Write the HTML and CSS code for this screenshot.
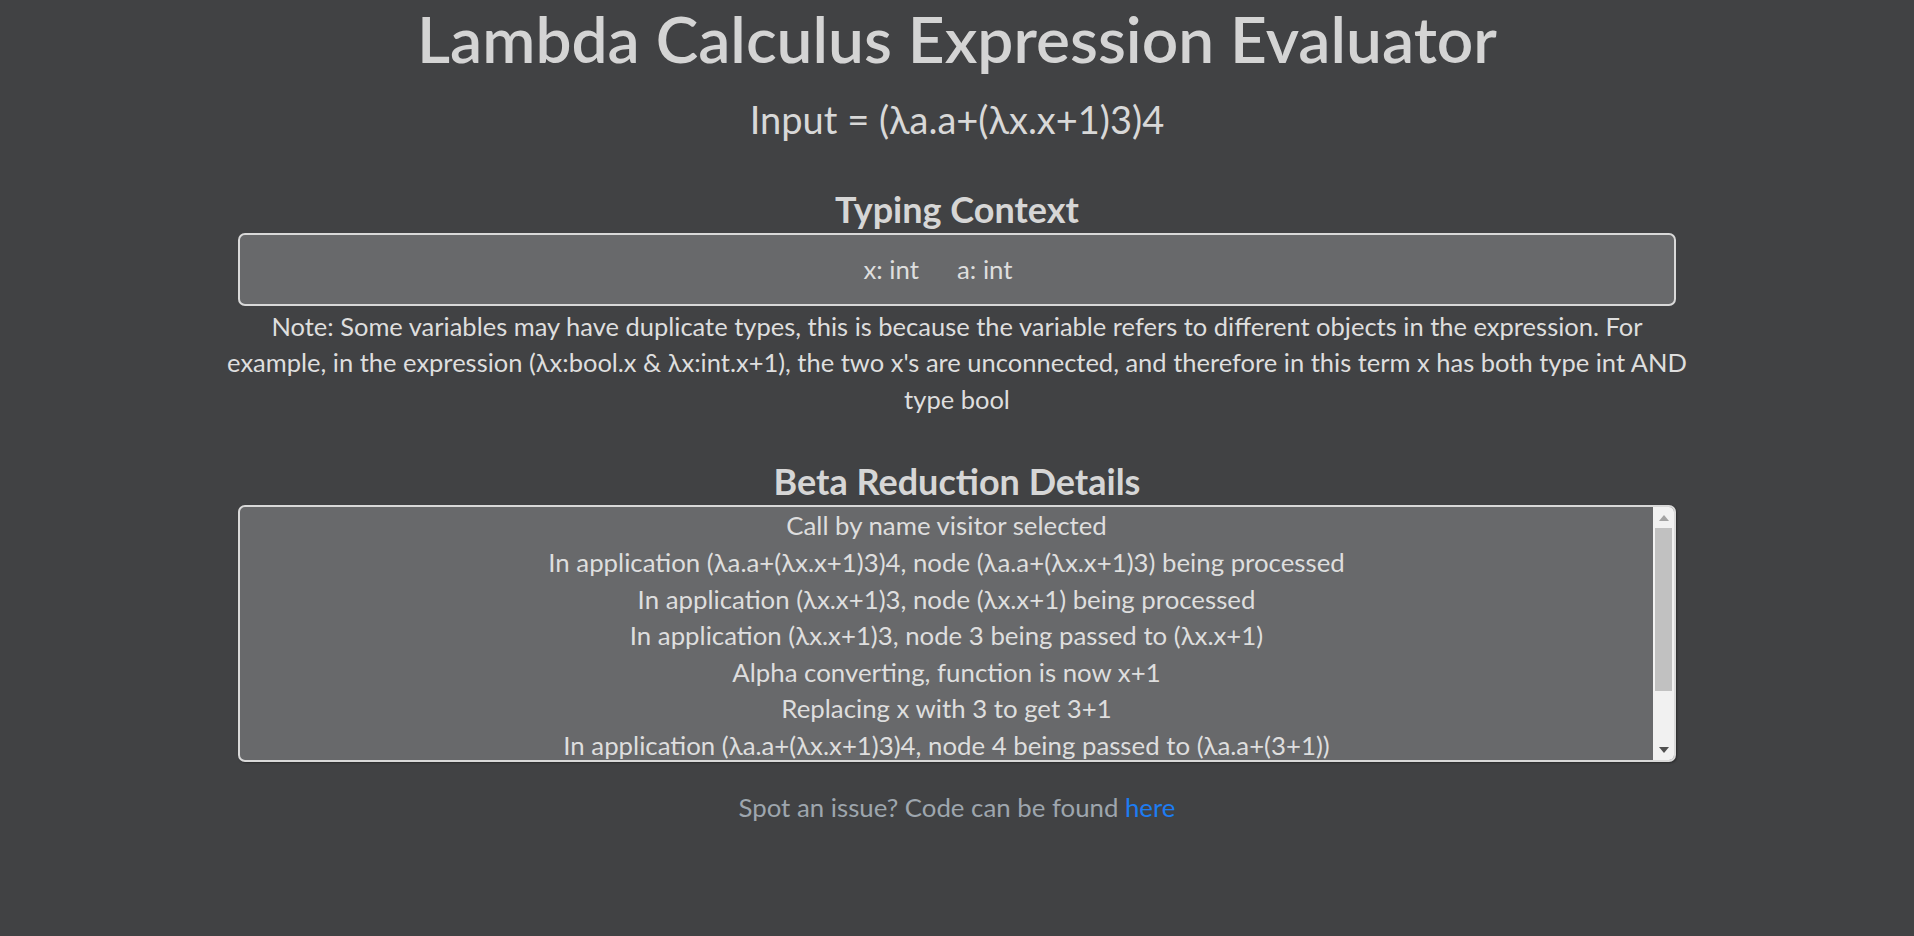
FILE: index.html
```html
<!DOCTYPE html>
<html lang="en">
<head>
<meta charset="utf-8">
<title>Lambda Calculus Expression Evaluator</title>
<link rel="stylesheet" href="styles.css">
</head>
<body>
<main class="page">
  <h1 class="title">Lambda Calculus Expression Evaluator</h1>
  <div class="input-line">Input = (λa.a+(λx.x+1)3)4</div>

  <section class="section">
    <h2 class="section-title">Typing Context</h2>
    <div class="panel context">
      <span class="ctx-item">x: int</span><span class="ctx-item">a: int</span>
    </div>
    <p class="note">Note: Some variables may have duplicate types, this is because the variable refers to different objects in the expression. For example, in the expression (λx:bool.x &amp; λx:int.x+1), the two x's are unconnected, and therefore in this term x has both type int AND type bool</p>
  </section>

  <section class="section beta">
    <h2 class="section-title">Beta Reduction Details</h2>
    <div class="panel steps">
      <div class="steps-list">
        <div class="step">Call by name visitor selected</div>
        <div class="step">In application (λa.a+(λx.x+1)3)4, node (λa.a+(λx.x+1)3) being processed</div>
        <div class="step">In application (λx.x+1)3, node (λx.x+1) being processed</div>
        <div class="step">In application (λx.x+1)3, node 3 being passed to (λx.x+1)</div>
        <div class="step">Alpha converting, function is now x+1</div>
        <div class="step">Replacing x with 3 to get 3+1</div>
        <div class="step">In application (λa.a+(λx.x+1)3)4, node 4 being passed to (λa.a+(3+1))</div>
        <div class="step">Alpha converting, function is now a+(3+1)</div>
        <div class="step">Replacing a with 4 to get 4+(3+1)</div>
      </div>
      <div class="scrollbar" aria-hidden="true">
        <div class="sb-button">
          <svg width="10" height="6" viewBox="0 0 10 6"><polygon points="0,6 10,6 5,0" fill="#a3a3a3"/></svg>
        </div>
        <div class="sb-track"><div class="sb-thumb"></div></div>
        <div class="sb-button">
          <svg width="10" height="6" viewBox="0 0 10 6"><polygon points="0,0 10,0 5,6" fill="#505050"/></svg>
        </div>
      </div>
    </div>
  </section>

  <footer class="footer">Spot an issue? Code can be found <a class="link" href="#">here</a></footer>
</main>
</body>
</html>
```
FILE: styles.css
```css
html, body {
  margin: 0;
  padding: 0;
  background: #414244;
}

body {
  font-family: Lato, "Noto Sans", "DejaVu Sans", sans-serif;
  color: #dcdcdc;
}

.page {
  width: 1438px;
  margin: 0 auto;
  text-align: center;
}

.title {
  margin: 0;
  font-size: 64px;
  font-weight: 600;
  line-height: 77px;
  color: #d4d4d4;
}

.input-line {
  margin-top: 19px;
  font-size: 38px;
  line-height: 46px;
  color: #d8d8d8;
}

.section {
  margin-top: 45.5px;
}

.section.beta {
  margin-top: 42.5px;
}

.section-title {
  margin: 0 0 2.5px;
  font-size: 36px;
  font-weight: 700;
  line-height: 43px;
  color: #d6d6d6;
}

.panel {
  background: #68696b;
  border: 2px solid #d9d9d9;
  border-radius: 7px;
  font-size: 25.8px;
  line-height: 36.6px;
  color: #dedede;
}

.context {
  padding: 16px 0;
}

.ctx-item {
  display: inline-block;
  margin-right: 38px;
}

.note {
  margin: 2px -16px 0;
  font-size: 25.5px;
  line-height: 36.6px;
  color: #dedede;
}

.steps {
  display: flex;
  height: 253px;
  overflow: hidden;
  box-shadow: 1px 1px 2px rgba(0, 0, 0, 0.35);
}

.steps-list {
  flex: 1;
  min-width: 0;
  overflow: hidden;
}

.step {
  white-space: nowrap;
}

.scrollbar {
  width: 21px;
  flex: none;
  display: flex;
  flex-direction: column;
  background: #f1f1f1;
}

.sb-button {
  height: 21px;
  flex: none;
  display: flex;
  align-items: center;
  justify-content: center;
}

.sb-button svg {
  display: block;
}

.sb-track {
  flex: 1;
  padding: 0 2px;
}

.sb-thumb {
  height: 163px;
  background: #c1c1c1;
}

.footer {
  margin-top: 27px;
  font-size: 25.8px;
  line-height: 36.6px;
  color: #9ea6ae;
}

.link {
  color: #1d7cf2;
  text-decoration: none;
}
```
